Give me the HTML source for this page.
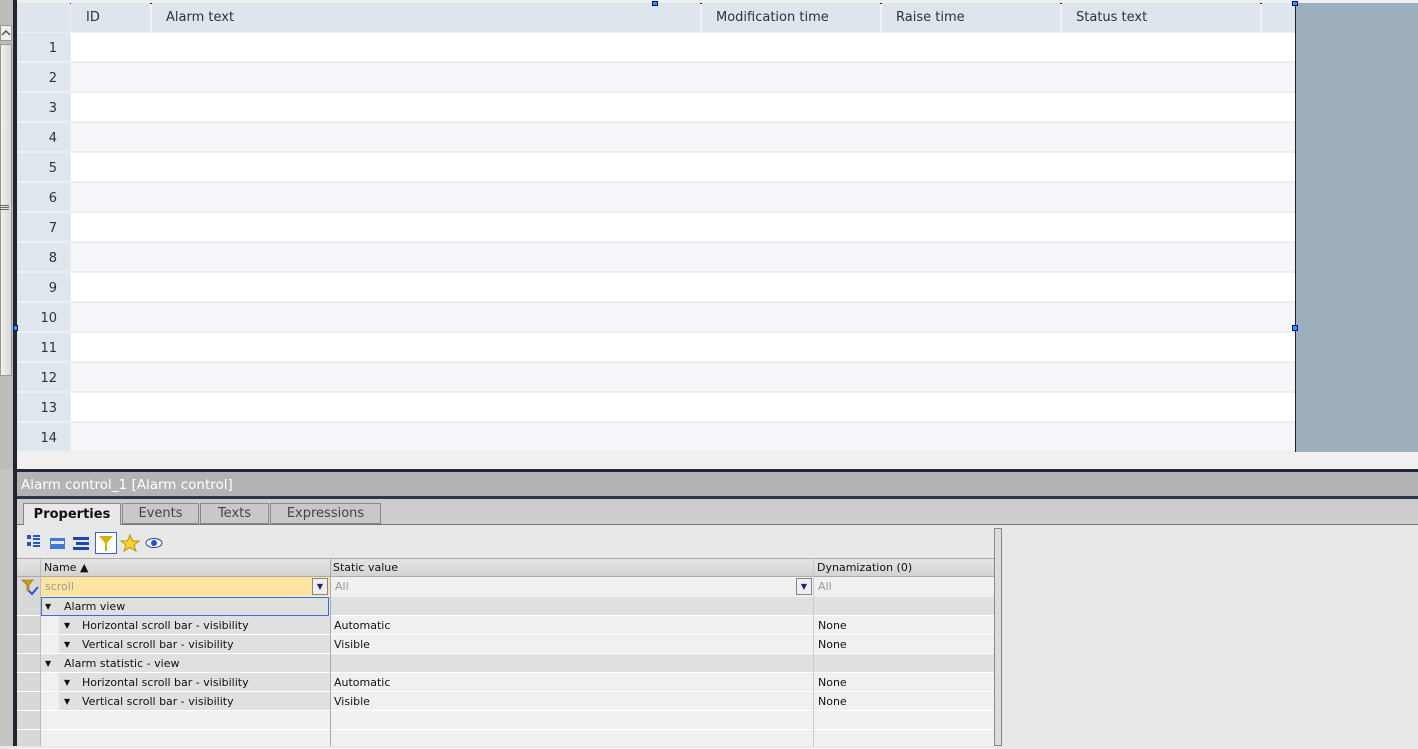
<!DOCTYPE html>
<html><head><meta charset="utf-8"><style>
*{margin:0;padding:0;box-sizing:border-box}
body{width:1418px;height:746px;position:relative;overflow:hidden;background:#e8e8e8;font-family:"DejaVu Sans","Liberation Sans",sans-serif}
.a{position:absolute}
.hd{font-size:13px;color:#2b3240;top:3px;height:29px;line-height:30px;background:#dfe5ec}
.rn{left:17px;width:53px;height:28px;background:#e0e6ed;font-size:13px;color:#2b3240;text-align:right;padding-right:13px;line-height:31px}
.rr{left:71px;width:1224px;height:28px}
.g{font-size:11px;color:#111;line-height:19px}
</style></head><body>
<div class="a" style="left:0;top:0;width:1418px;height:469px;background:#f0f0f0"></div>
<div class="a" style="left:1296px;top:3px;width:122px;height:449px;background:#9dafbd"></div>
<div class="a" style="left:0;top:0;width:13px;height:469px;background:#bcbcbc"></div>
<svg class="a" style="left:0;top:25px" width="12" height="16"><rect x="0.5" y="0.5" width="11" height="15" fill="#eee" stroke="#999"/><path d="M2 10 L6 6 L10 10" fill="none" stroke="#555" stroke-width="1.5"/></svg>
<div class="a" style="left:0;top:44px;width:12px;height:332px;background:linear-gradient(90deg,#f2f2f2,#d8d8d8);border:1px solid #999"></div>
<div class="a" style="left:0;top:205px;width:9px;height:1px;background:#666;box-shadow:0 2px #666,0 4px #666"></div>
<div class="a" style="left:13px;top:0;width:4px;height:469px;background:#22252e"></div>
<div class="a" style="left:17px;top:3px;width:1279px;height:1px;background:#222"></div>
<div class="a" style="left:1295px;top:3px;width:1px;height:449px;background:#222"></div>
<div class="a hd" style="left:17px;width:53px"></div>
<div class="a hd" style="left:71px;width:79px;padding-left:15px">ID</div>
<div class="a hd" style="left:152px;width:548px;padding-left:14px">Alarm text</div>
<div class="a hd" style="left:702px;width:178px;padding-left:14px">Modification time</div>
<div class="a hd" style="left:882px;width:178px;padding-left:14px">Raise time</div>
<div class="a hd" style="left:1062px;width:198px;padding-left:14px">Status text</div>
<div class="a hd" style="left:1262px;width:33px"></div>
<div class="a" style="left:17px;top:32px;width:1278px;height:420px;background:#eceef2"></div>
<div id="rows"></div>
<script>
var h='';for(var i=0;i<14;i++){var t=33+i*30;h+='<div class="a rn" style="top:'+t+'px">'+(i+1)+'</div><div class="a rr" style="top:'+t+'px;background:'+(i%2?'#f4f6f9':'#fff')+'"></div>';}
document.getElementById('rows').innerHTML=h;
</script>
<div class="a" style="left:13px;top:325px;width:5px;height:6px;background:#2ac;border:1px solid #00a"></div>
<div class="a" style="left:1292px;top:325px;width:6px;height:6px;background:#2ac;border:1px solid #00a"></div>
<div class="a" style="left:652px;top:1px;width:6px;height:5px;background:#2ac;border:1px solid #00a"></div>
<div class="a" style="left:1292px;top:1px;width:6px;height:5px;background:#2ac;border:1px solid #00a"></div>
<div class="a" style="left:13px;top:469px;width:1405px;height:3px;background:#22273a"></div>
<div class="a" style="left:13px;top:472px;width:1405px;height:24px;background:#b3b3b3;color:#fff;font-size:13.5px;font-weight:500;line-height:26px;padding-left:8px">Alarm control_1 [Alarm control]</div>
<div class="a" style="left:13px;top:496px;width:1405px;height:3px;background:#2d3447"></div>
<div class="a" style="left:0;top:469px;width:13px;height:277px;background:#c4c4c4"></div>
<div class="a" style="left:13px;top:469px;width:4px;height:277px;background:#22252e"></div>
<div class="a" style="left:17px;top:499px;width:1401px;height:25px;background:#cdcdcd"></div>
<div class="a" style="left:17px;top:524px;width:1401px;height:1px;background:#777"></div>
<div class="a" style="left:23px;top:503px;width:98px;height:22px;background:#e8e8e8;border:1px solid #888;border-bottom:none;font-size:13px;font-weight:bold;color:#111;line-height:21px;text-align:center">Properties</div>
<div class="a" style="left:122px;top:503px;width:77px;height:21px;background:#c8c8c8;border:1px solid #888;font-size:13px;color:#444;line-height:20px;text-align:center">Events</div>
<div class="a" style="left:200px;top:503px;width:69px;height:21px;background:#c8c8c8;border:1px solid #888;font-size:13px;color:#444;line-height:20px;text-align:center">Texts</div>
<div class="a" style="left:270px;top:503px;width:111px;height:21px;background:#c8c8c8;border:1px solid #888;font-size:13px;color:#444;line-height:20px;text-align:center">Expressions</div>
<svg class="a" style="left:24px;top:532px" width="145" height="22">
<rect x="3" y="3" width="4" height="4" fill="#2255cc"/><rect x="9" y="3" width="7" height="2" fill="#2255cc"/><rect x="9" y="6" width="7" height="2" fill="#2255cc"/>
<rect x="3" y="10" width="4" height="4" fill="#2255cc"/><rect x="9" y="10" width="7" height="2" fill="#2255cc"/><rect x="9" y="13" width="7" height="2" fill="#2255cc"/>
<rect x="26" y="6" width="15" height="11" fill="#4477dd"/><rect x="27" y="9" width="13" height="3" fill="#ddeeff"/>
<rect x="49" y="5" width="16" height="3" fill="#2244bb"/><rect x="52" y="10" width="13" height="3" fill="#2244bb"/><rect x="49" y="15" width="16" height="3" fill="#2244bb"/>
<rect x="71.5" y="0.5" width="21" height="21" fill="#fff" stroke="#3366cc"/><path d="M75 4 L89 4 L83 11 L83 19 L81 19 L81 11 Z" fill="#d8b000"/>
<path d="M106 3 L108.5 9 L115 9 L110 13 L112 19 L106 15.5 L100 19 L102 13 L97 9 L103.5 9 Z" fill="#f6d43a" stroke="#c09000"/>
<ellipse cx="130" cy="11" rx="8" ry="4.5" fill="#fff" stroke="#2244aa"/><circle cx="130" cy="11" r="3" fill="#2255cc"/>
</svg>
<div class="a" style="left:17px;top:558px;width:977px;height:188px;background:#f0f0f0"></div>
<div class="a" style="left:17px;top:558px;width:977px;height:19px;background:linear-gradient(#e4e4e4,#d4d4d4);border-top:1px solid #aaa;border-bottom:1px solid #aaa"></div>
<div class="a g" style="left:44px;top:558px">Name &#9650;</div>
<div class="a g" style="left:333px;top:558px">Static value</div>
<div class="a g" style="left:817px;top:558px">Dynamization (0)</div>
<div class="a" style="left:17px;top:577px;width:23px;height:169px;background:#d8d8d8"></div>
<div class="a" style="left:40px;top:577px;width:290px;height:19px;background:#fde4a0"></div>
<div class="a g" style="left:45px;top:577px;color:#999">scroll</div>
<div class="a" style="left:312px;top:578px;width:16px;height:17px;background:#eee;border:1px solid #888;font-size:8px;color:#1a237e;text-align:center;line-height:15px">&#9660;</div>
<div class="a g" style="left:335px;top:577px;color:#999">All</div>
<div class="a" style="left:796px;top:578px;width:16px;height:17px;background:#eee;border:1px solid #888;font-size:8px;color:#1a237e;text-align:center;line-height:15px">&#9660;</div>
<div class="a g" style="left:818px;top:577px;color:#999">All</div>
<svg class="a" style="left:20px;top:578px" width="20" height="18"><path d="M2 2 L13 2 L9 7 L9 13 L7 13 L7 7 Z" fill="#c9a000" stroke="#8a6d00" stroke-width="0.6"/><path d="M9 13 L12 16 L18 9" fill="none" stroke="#2255cc" stroke-width="2"/></svg>
<div id="g"></div>
<script>
var R=[[0,'Alarm view','',''],[1,'Horizontal scroll bar - visibility','Automatic','None'],[1,'Vertical scroll bar - visibility','Visible','None'],[0,'Alarm statistic - view','',''],[1,'Horizontal scroll bar - visibility','Automatic','None'],[1,'Vertical scroll bar - visibility','Visible','None']];
var s='';for(var i=0;i<8;i++){var t=597+i*19;var r=R[i];
s+='<div class="a" style="left:17px;top:'+(t+18)+'px;width:977px;height:1px;background:#fff"></div>';
if(r){var bg=r[0]?'#f0f0f0':'#e0e0e0';
s+='<div class="a" style="left:40px;top:'+t+'px;width:954px;height:18px;background:'+bg+'"></div>';
if(r[0])s+='<div class="a" style="left:59px;top:'+t+'px;width:271px;height:18px;background:#e0e0e0"></div>';
s+='<div class="a g" style="left:'+(r[0]?64:45)+'px;top:'+t+'px;font-size:8px">&#9660;</div><div class="a g" style="left:'+(r[0]?82:64)+'px;top:'+t+'px">'+r[1]+'</div><div class="a g" style="left:334px;top:'+t+'px">'+r[2]+'</div><div class="a g" style="left:818px;top:'+t+'px">'+r[3]+'</div>';}}
document.getElementById('g').innerHTML=s;
</script>
<div class="a" style="left:41px;top:597px;width:288px;height:19px;border:1px solid #3a6fd0"></div>
<div class="a" style="left:330px;top:558px;width:1px;height:188px;background:#aaa"></div>
<div class="a" style="left:813px;top:558px;width:1px;height:188px;background:#ccc"></div>
<div class="a" style="left:40px;top:558px;width:1px;height:188px;background:#bbb"></div>
<div class="a" style="left:994px;top:528px;width:8px;height:218px;background:#dcdcdc;border:1px solid #888"></div>
</body></html>
